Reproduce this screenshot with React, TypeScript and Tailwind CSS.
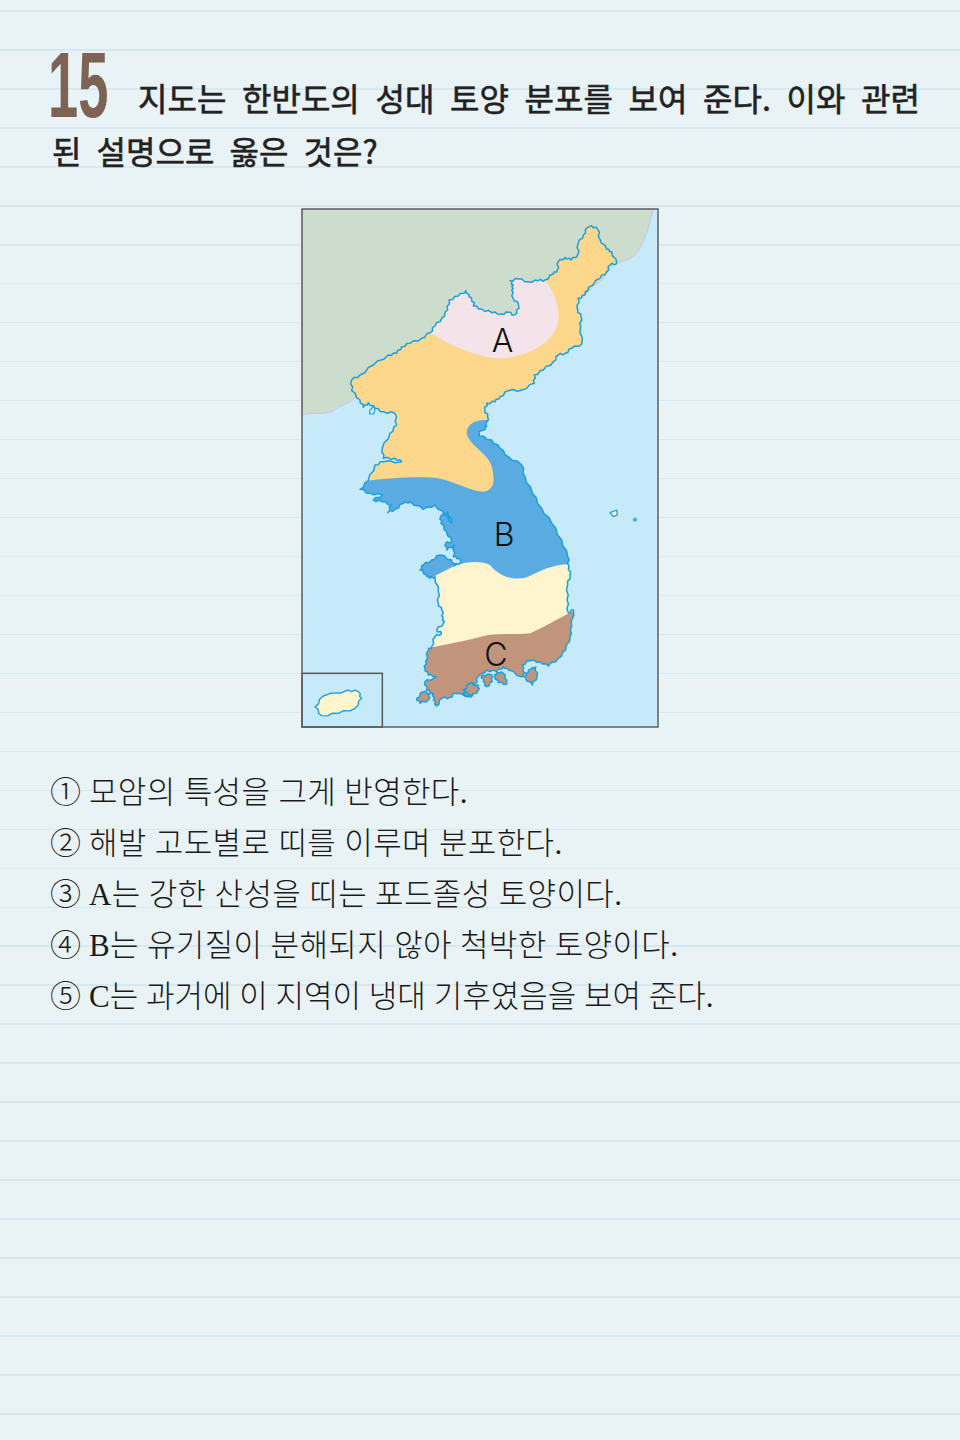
import React from "react";

type P = [number, number];

const top: P[] = [
  [405,398],[420,378],[440,355],[458,330],[462,300],[490,288],[513,272],[522,290],[538,308],[535,318],[560,327],[590,338],[620,342],[640,337],[658,345],[672,325],[670,312],[655,295],[650,270],[655,255],[645,242],[670,237],[700,245],[730,242],[750,240],[775,222],[787,210],[790,185],[810,172],[828,180],[848,165],[850,130],[865,105],[878,82],[890,77],[908,88],[915,118],[935,148],[950,155],[965,190],[945,195],[935,215],[915,235],[880,262],[870,285],[850,295],[848,330],[858,350],[857,380],[860,432],[830,445],[810,460],[790,465],[775,485],[745,510],[718,525],[718,550],[680,570],[640,572],[615,590],[600,605],[575,610],[570,630],[578,650],[575,680],[565,690],[552,695],[553,708],[590,720],[615,745],[640,770],[680,795],
];
const bottom: P[] = [
  [690,50],[712,100],[740,145],[770,190],[800,240],[818,290],[822,320],[825,345],[818,375],[816,420],[820,458],[835,450],[830,500],[825,530],[812,570],[790,595],[760,618],[735,605],[705,602],[680,615],[690,640],[680,650],[640,630],[625,620],[605,635],[575,630],[550,650],[540,672],[525,670],[505,690],[520,700],[530,710],[480,700],[465,712],[440,715],[425,738],[415,720],[415,700],[395,690],[390,665],[415,655],[425,650],[400,645],[390,625],[392,605],[400,570],[410,560],[420,530],[440,520],[425,510],[445,490],[445,475],[440,450],[430,430],[430,395],[420,350],[405,355],[395,345],[375,330],[385,315],[410,300],[435,285],[470,300],[478,318],[498,305],[492,295],[475,290],[478,255],[455,270],[452,250],[470,245],[455,215],[438,190],[437,170],[458,155],[470,188],[450,165],[420,135],[385,148],[345,125],[325,130],[300,148],[278,158],[290,135],[260,125],[235,120],[262,105],[225,100],[195,88],[220,62],[240,15],[265,5],
];
const west: P[] = [
  [320,785],[300,775],[265,775],[262,745],[285,700],[305,675],[300,640],[265,635],[240,625],[220,608],[205,622],[195,600],[170,572],[170,540],[195,525],[235,495],[280,465],[305,460],[320,440],[345,430],[380,415],
];

function crinkle(pts: P[]): string {
  const out: string[] = [];
  pts.forEach((p, i) => {
    const n = pts[(i + 1) % pts.length];
    out.push(`${p[0]},${p[1]}`);
    const dx = n[0] - p[0];
    const dy = n[1] - p[1];
    const len = Math.hypot(dx, dy);
    if (len > 14) {
      const s = i % 2 === 0 ? 3 : -3;
      out.push(`${p[0] + dx * 0.33 - (dy / len) * s},${p[1] + dy * 0.33 + (dx / len) * s}`);
      out.push(`${p[0] + dx * 0.66 + (dy / len) * s},${p[1] + dy * 0.66 - (dx / len) * s}`);
    }
  });
  return "M" + out.join("L") + "Z";
}

const mainland: P[] = [...top, ...bottom.map(([x, y]) => [x, y + 780] as P), ...west];
const isles: P[][] = [
  [[365,715],[385,695],[405,700],[400,720],[375,730]],
  [[505,690],[525,670],[550,675],[550,690],[530,710],[510,705]],
  [[560,645],[590,645],[592,665],[575,680],[565,665]],
  [[605,635],[625,640],[635,660],[635,672],[610,668],[600,650]],
  [[692,640],[708,628],[722,620],[726,650],[712,675],[692,655]],
].map((s) => s.map(([x, y]) => [x, y + 780] as P));

const coast = [mainland, ...isles].map(crinkle).join(" ");
const jeju = crinkle([[60,1520],[85,1488],[160,1470],[190,1475],[200,1495],[180,1525],[130,1540],[80,1547]]);

function KoreaMap() {
  return (
    <svg viewBox="21 27 1068 1554" className="block h-[518px] w-[356px] overflow-visible">
      <defs>
        <clipPath id="land">
          <path d={coast} />
        </clipPath>
      </defs>
      <rect x="21" y="27" width="1068" height="1554" fill="#c7eafb" />
      <path
        d="M21,27L1075,27C1065,70 1050,130 1020,165C1000,180 985,185 960,188L930,225Q925,245 905,250L855,300L700,450L300,560L180,590C170,610 135,615 110,635C85,645 50,635 21,645Z"
        fill="#ccdccd"
        stroke="#c9c8dc"
        strokeWidth="3"
      />
      <path d={coast} fill="#fdd78c" />
      <g clipPath="url(#land)">
        <path d="M405,398C470,440 560,475 620,475C700,470 800,420 790,340C788,300 770,265 750,240L750,100L300,100Z" fill="#f4e4ea" />
        <path d="M575,660C545,658 515,670 515,700C520,735 580,760 590,800C600,835 600,870 565,875C530,875 480,845 430,835C380,828 280,835 218,842L100,850L100,1300L900,1300L900,600Z" fill="#5aabe1" />
        <path d="M400,1140L425,1125L478,1098C510,1085 560,1080 585,1095C610,1125 640,1138 680,1135C720,1130 740,1095 830,1092L900,1092L900,1400L300,1400Z" fill="#fef5cf" />
        <path d="M400,1343C450,1335 500,1325 580,1305C620,1300 680,1305 710,1298C770,1270 800,1250 840,1232L900,1232L900,1600L300,1600Z" fill="#c0957c" />
      </g>
      <path d={coast} fill="none" stroke="#1ba0dc" strokeWidth="4.5" strokeLinejoin="round" />
      <path d="M224,632L236,618L240,630L236,642L224,642Z" fill="#c7eafb" stroke="#1ba0dc" strokeWidth="3.5" />
      <path d="M945,938L965,930L967,945L955,950Z" fill="#fef5cf" stroke="#1ba0dc" strokeWidth="4" strokeLinejoin="round" />
      <circle cx="1020" cy="959" r="5" fill="#5aabe1" stroke="#1ba0dc" strokeWidth="2" />
      <rect x="21" y="1420" width="241" height="161" fill="none" stroke="#555" strokeWidth="4.5" />
      <path d={jeju} fill="#fef5cf" stroke="#1ba0dc" strokeWidth="4" strokeLinejoin="round" />
      <g fill="#111" fontFamily="Inter,'Liberation Sans',sans-serif" fontSize="96" fontWeight="300">
        <text x="590" y="455">A</text>
        <text x="596" y="1038">B</text>
        <text x="568" y="1398">C</text>
      </g>
      <rect x="21" y="27" width="1068" height="1554" fill="none" stroke="#5f5f5f" strokeWidth="4.5" />
    </svg>
  );
}

const options = [
  ["①", "모암의 특성을 그게 반영한다.", "tracking-[0.35px]"],
  ["②", "해발 고도별로 띠를 이루며 분포한다.", "tracking-[0.35px]"],
  ["③", "A는 강한 산성을 띠는 포드졸성 토양이다.", "tracking-[0.35px]"],
  ["④", "B는 유기질이 분해되지 않아 척박한 토양이다.", "tracking-[0.35px]"],
  ["⑤", "C는 과거에 이 지역이 냉대 기후였음을 보여 준다.", "tracking-normal"],
];

export default function App() {
  return (
    <div className="min-h-[1440px] w-full bg-[#e9f3f6] bg-[repeating-linear-gradient(180deg,transparent_0,transparent_10.2px,#d6e9f2_10.2px,#d6e9f2_11.7px,transparent_11.7px,transparent_38.97px)] px-[52px] pt-[71px]">
      <h1 className="w-[868px] text-justify text-[32px] font-normal leading-[53px] text-[#222] [-webkit-text-stroke:0.6px_#222] [font-family:'Noto_Sans_CJK_KR',sans-serif] [word-spacing:8px]">
        <span className="inline-block w-[86px] translate-x-[-4px] translate-y-[6px] text-[92px] font-bold leading-[0] text-[#7d6354] [-webkit-text-stroke:0] [font-family:'Liberation_Sans_Narrow','Liberation_Sans',sans-serif] [word-spacing:0]">
          <span className="inline-block origin-left scale-x-[0.59] whitespace-nowrap">15</span>
        </span>
        지도는 한반도의 성대 토양 분포를 보여 준다. 이와 관련된 설명으로 옳은 것은?
      </h1>
      <div className="mt-[32px] flex justify-center">
        <KoreaMap />
      </div>
      <ul className="mt-[40px] flex flex-col text-[#1a1a1a] [font-family:'Liberation_Serif','Noto_Sans_CJK_KR',serif]">
        {options.map(([n, t, c]) => (
          <li key={n} className="flex h-[51px] items-center whitespace-nowrap text-[31px] font-light leading-[51px]">
            <span className="ml-[-2px] w-[39px] shrink-0">{n}</span>
            <span className={c}>{t}</span>
          </li>
        ))}
      </ul>
    </div>
  );
}
